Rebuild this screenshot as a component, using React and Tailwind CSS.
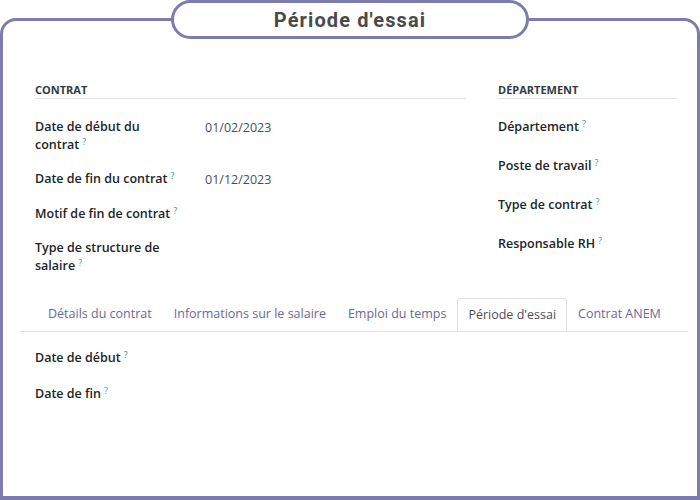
const Q = () => (
  <span className="ml-[3px] text-[9px] leading-[9px] font-normal text-[#3d8bc9] align-[4px]">?</span>
);

const Label = ({ children }) => (
  <span className="font-semibold text-[#212529]">{children}</span>
);

const Field = ({ label, value }) => (
  <div className="flex">
    <div className="w-[170px] pr-[18px] leading-[18px]">
      <Label>{label}</Label>
      <Q />
    </div>
    {value && <div className="leading-[18px] text-[#495057] pt-[1px]">{value}</div>}
  </div>
);

const SectionTitle = ({ children }) => (
  <div className="text-[11px] font-bold uppercase text-[#343a40] leading-[14px] pb-[1px] border-b border-[#e2e4e8]">
    {children}
  </div>
);

const tabs = ['Détails du contrat', 'Informations sur le salaire', 'Emploi du temps', "Période d'essai", 'Contrat ANEM'];

export default function App() {
  return (
    <div className="relative w-[700px] h-[500px] bg-white overflow-hidden text-[12.5px]" style={{ fontFamily: '"Open Sans", "Noto Sans", sans-serif' }}>
      <div className="mt-[18px] h-[482px] border-[3px] border-b-4 border-[#7d7cae] rounded-t-[16px] bg-white">
        <div className="grid grid-cols-[431px_179px] gap-x-[32px] pl-[32px] pt-[62px]">
          <div className="flex flex-col">
            <SectionTitle>Contrat</SectionTitle>
            <div className="flex flex-col gap-[16px] pt-[19px]">
              <Field label="Date de début du contrat" value="01/02/2023" />
              <Field label="Date de fin du contrat" value="01/12/2023" />
              <Field label="Motif de fin de contrat" />
              <Field label="Type de structure de salaire" />
            </div>
          </div>
          <div className="flex flex-col">
            <SectionTitle>Département</SectionTitle>
            <div className="flex flex-col gap-[21px] pt-[19px] leading-[18px]">
              <div><Label>Département</Label><Q /></div>
              <div><Label>Poste de travail</Label><Q /></div>
              <div><Label>Type de contrat</Label><Q /></div>
              <div><Label>Responsable RH</Label><Q /></div>
            </div>
          </div>
        </div>

        <div className="mt-[23px] ml-[17px] mr-[9px] flex pl-[17px] border-b border-[#dee2e6]">
          {tabs.map((t) => {
            const active = t === "Période d'essai";
            return (
              <div
                key={t}
                className={
                  active
                    ? 'shrink-0 whitespace-nowrap h-[33px] -mb-px px-[10px] flex items-center bg-white border border-b-0 border-[#dee2e6] rounded-t-[3px] text-[#4b4d5a]'
                    : 'shrink-0 whitespace-nowrap h-[33px] px-[11px] flex items-center text-[#6b6996]'
                }
              >
                {t}
              </div>
            );
          })}
        </div>

        <div className="flex flex-col gap-[18px] pl-[32px] pt-[17px] leading-[18px]">
          <div><Label>Date de début</Label><Q /></div>
          <div><Label>Date de fin</Label><Q /></div>
        </div>
      </div>

      <div className="absolute top-0 left-[171px] w-[358px] h-[39px] rounded-full border-[3px] border-[#7d7cae] bg-white flex items-center justify-center">
        <span className="text-[20px] font-bold tracking-[1.1px] text-[#4a4a4a]" style={{ fontFamily: 'Roboto, "Noto Sans", sans-serif' }}>
          Période d'essai
        </span>
      </div>
    </div>
  );
}
